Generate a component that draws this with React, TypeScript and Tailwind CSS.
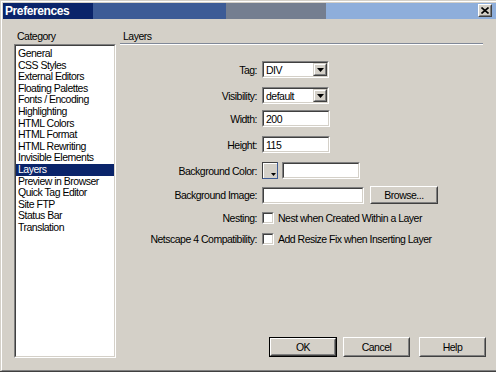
import React from "react";

const items = [
  "General",
  "CSS Styles",
  "External Editors",
  "Floating Palettes",
  "Fonts / Encoding",
  "Highlighting",
  "HTML Colors",
  "HTML Format",
  "HTML Rewriting",
  "Invisible Elements",
  "Layers",
  "Preview in Browser",
  "Quick Tag Editor",
  "Site FTP",
  "Status Bar",
  "Translation",
];

function Arrow() {
  return (
    <svg width="7" height="4" viewBox="0 0 7 4">
      <path d="M0 0H7L3.5 4Z" fill="#000" />
    </svg>
  );
}

function Select({ value, w }: { value: string; w: string }) {
  return (
    <div className={"h-[17px] border border-t-[#808080] border-l-[#808080] border-r-white border-b-white " + w}>
      <div className="h-full flex border border-t-[#404040] border-l-[#404040] border-r-[#d4d0c8] border-b-[#d4d0c8] bg-white">
        <div className="flex-1 flex items-center pl-[2px]">{value}</div>
        <div className="w-[14px] h-full border border-t-[#d4d0c8] border-l-[#d4d0c8] border-r-[#404040] border-b-[#404040] bg-[#d4d0c8]">
          <div className="h-full flex items-center justify-center border border-t-white border-l-white border-r-[#808080] border-b-[#808080]">
            <Arrow />
          </div>
        </div>
      </div>
    </div>
  );
}

function Input({ value, w }: { value?: string; w: string }) {
  return (
    <div className={"h-[17px] border border-t-[#808080] border-l-[#808080] border-r-white border-b-white " + w}>
      <div className="h-full flex items-center pl-[2px] border border-t-[#404040] border-l-[#404040] border-r-[#d4d0c8] border-b-[#d4d0c8] bg-white">
        {value}
      </div>
    </div>
  );
}

function Check() {
  return (
    <div className="w-[12px] h-[12px] border border-t-[#808080] border-l-[#808080] border-r-white border-b-white">
      <div className="h-full border border-t-[#404040] border-l-[#404040] border-r-[#d4d0c8] border-b-[#d4d0c8] bg-white" />
    </div>
  );
}

function Button({ label, w, h }: { label: string; w: string; h: string }) {
  return (
    <div className={"border border-t-white border-l-white border-r-[#404040] border-b-[#404040] bg-[#d4d0c8] " + w + " " + h}>
      <div className="h-full flex items-center justify-center border border-t-[#d4d0c8] border-l-[#d4d0c8] border-r-[#808080] border-b-[#808080]">
        {label}
      </div>
    </div>
  );
}

function Row({ label, cls, children }: { label: string; cls: string; children: React.ReactNode }) {
  return (
    <div className={"flex items-center " + cls}>
      <div className="w-[137px] text-right whitespace-nowrap">{label}</div>
      <div className="ml-[5px] flex items-center">{children}</div>
    </div>
  );
}

export default function App() {
  return (
    <div className="w-[496px] h-[372px] overflow-hidden bg-[#d4d0c8] pt-px pl-px border-b border-b-[#404040] font-['Liberation_Sans',Arial,sans-serif] text-black">
      <div className="h-[370px] w-[495px] border-t border-l border-t-white border-l-white border-b border-b-[#808080] pt-px pl-px flex flex-col">
        <div className="h-[16px] flex items-start justify-between bg-[linear-gradient(to_right,#0a246a_90px,#3c5b96_90px,#3c5b96_223px,#747e90_223px,#747e90_323px,#8eaedb_323px)]">
          <div className="pl-[2px] text-[12px] font-bold leading-[16px] text-white tracking-[-0.4px]">Preferences</div>
          <div className="mt-px mr-[4px] w-[14px] h-[13px] border border-t-white border-l-white border-r-[#404040] border-b-[#404040] bg-[#d4d0c8]">
            <div className="h-full flex items-center justify-center border border-t-[#d4d0c8] border-l-[#d4d0c8] border-r-[#808080] border-b-[#808080]">
              <svg width="8" height="7" viewBox="0 0 8 7">
                <path d="M0.5 0.5L7.5 6.5M7.5 0.5L0.5 6.5" stroke="#000" strokeWidth="1.6" />
              </svg>
            </div>
          </div>
        </div>
        <div className="flex h-[350px] pl-[11px] text-[10.5px] leading-[12px] tracking-[-0.5px]">
          <div className="w-[102px] flex flex-col">
            <div className="mt-[11px] h-[12px] pl-[3px]">Category</div>
            <div className="mt-[2px] h-[314px] border border-t-[#808080] border-l-[#808080] border-r-white border-b-white">
              <div className="h-full border border-t-[#404040] border-l-[#404040] border-r-[#d4d0c8] border-b-[#d4d0c8] bg-white pt-[2px]">
                {items.map((it) => (
                  <div
                    key={it}
                    className={
                      it === "Layers"
                        ? "h-[11.6px] leading-[11.6px] pl-[2px] whitespace-nowrap bg-[#0a246a] text-white"
                        : "h-[11.6px] leading-[11.6px] pl-[2px] whitespace-nowrap"
                    }
                  >
                    {it}
                  </div>
                ))}
              </div>
            </div>
          </div>
          <div className="ml-[4px] w-[366px] flex flex-col">
            <div className="mt-[11px] h-[12px] pl-[3px]">Layers</div>
            <div className="mt-px w-[363px] h-[2px] border-t border-t-[#808898] border-b border-b-white" />
            <Row label="Tag:" cls="mt-[16px] h-[17px]">
              <Select value="DIV" w="w-[67px]" />
            </Row>
            <Row label="Visibility:" cls="mt-[9px] h-[17px]">
              <Select value="default" w="w-[67px]" />
            </Row>
            <Row label="Width:" cls="mt-[6px] h-[17px]">
              <Input value="200" w="w-[68px]" />
            </Row>
            <Row label="Height:" cls="mt-[9px] h-[17px]">
              <Input value="115" w="w-[68px]" />
            </Row>
            <Row label="Background Color:" cls="mt-[9px] h-[17px]">
              <div className="w-[16px] h-[17px] border border-t-[#404040] border-l-[#404040] border-r-[#3c5b96] border-b-[#3c5b96] bg-[#d4d0c8]">
                <div className="h-full flex items-end justify-end border-t border-l border-t-white border-l-white pr-px pb-[2px]">
                  <svg width="5" height="3" viewBox="0 0 5 3">
                    <path d="M0 0H5L2.5 3Z" fill="#000" />
                  </svg>
                </div>
              </div>
              <div className="ml-[4px]">
                <Input w="w-[78px]" />
              </div>
            </Row>
            <Row label="Background Image:" cls="mt-[7px] h-[18px]">
              <Input w="w-[102px]" />
              <div className="ml-[6px]">
                <Button label="Browse..." w="w-[68px]" h="h-[18px]" />
              </div>
            </Row>
            <Row label="Nesting:" cls="mt-[8px] h-[12px]">
              <Check />
              <div className="ml-[4px] whitespace-nowrap">Nest when Created Within a Layer</div>
            </Row>
            <Row label="Netscape 4 Compatibility:" cls="mt-[9px] h-[12px]">
              <Check />
              <div className="ml-[4px] whitespace-nowrap">Add Resize Fix when Inserting Layer</div>
            </Row>
            <div className="mt-auto mb-[12px] flex pl-[149px]">
              <div className="w-[68px] h-[20px] border border-black">
                <Button label="OK" w="w-full" h="h-full" />
              </div>
              <div className="ml-[6px]">
                <Button label="Cancel" w="w-[67px]" h="h-[20px]" />
              </div>
              <div className="ml-[9px]">
                <Button label="Help" w="w-[67px]" h="h-[20px]" />
              </div>
            </div>
          </div>
        </div>
      </div>
    </div>
  );
}
